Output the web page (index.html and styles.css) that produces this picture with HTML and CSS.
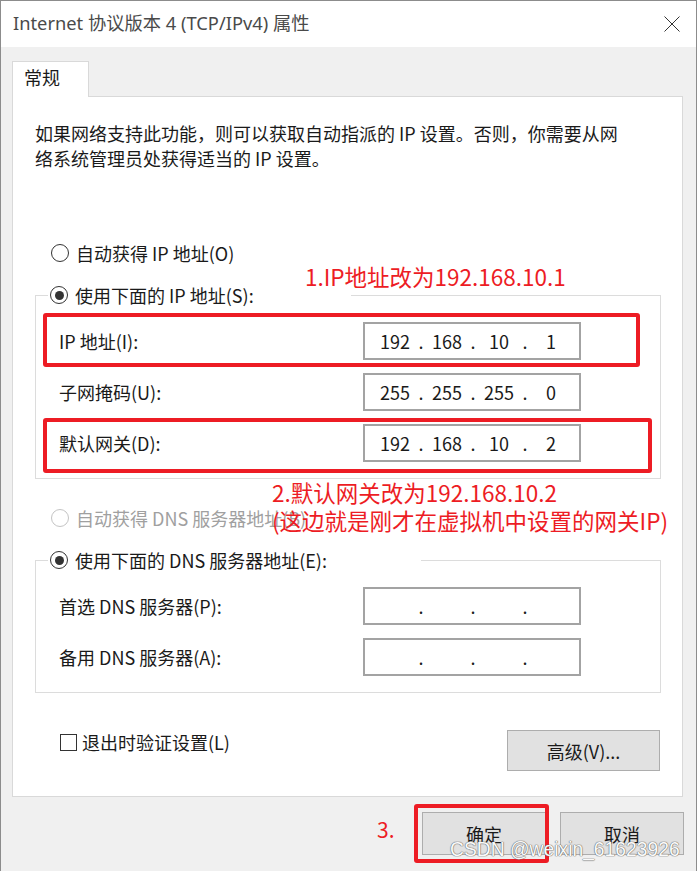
FILE: index.html
```html
<!DOCTYPE html>
<html lang="zh-CN">

<head>
    <meta charset="UTF-8">
    <meta name="viewport" content="width=device-width, initial-scale=1.0">
    <title>Internet 协议版本 4 (TCP/IPv4) 属性</title>
    <link rel="stylesheet" href="styles.css">
</head>

<body>
    <div class="window">
        <div class="titlebar">
            <span class="title">Internet 协议版本 4 (TCP/IPv4) 属性</span>
            <svg class="close" width="16" height="16" viewBox="0 0 16 16">
                <path d="M0.5 0.5 L15.5 15.5 M15.5 0.5 L0.5 15.5" stroke="#333" stroke-width="1" fill="none" />
            </svg>
        </div>

        <div class="main">
            <div class="tabs">
                <div class="tab">常规</div>
            </div>

            <div class="panel">
                <p class="desc">如果网络支持此功能，则可以获取自动指派的 IP 设置。否则，你需要从网<br>络系统管理员处获得适当的 IP 设置。</p>

                <!-- IP -->
                <label class="radio first"><span class="circle"></span>自动获得 IP 地址(O)</label>

                <div class="group">
                    <label class="radio legend legend-ip"><span class="circle checked"></span>使用下面的 IP 地址(S):</label>
                    <div class="rows">
                        <div class="row">
                            <span class="label">IP 地址(I):</span>
                            <div class="ip">
                                <span class="oct">192</span><span class="dot">.</span><span class="oct">168</span><span class="dot">.</span><span class="oct">10</span><span class="dot">.</span><span class="oct">1</span>
                            </div>
                        </div>
                        <div class="row">
                            <span class="label">子网掩码(U):</span>
                            <div class="ip">
                                <span class="oct">255</span><span class="dot">.</span><span class="oct">255</span><span class="dot">.</span><span class="oct">255</span><span class="dot">.</span><span class="oct">0</span>
                            </div>
                        </div>
                        <div class="row">
                            <span class="label">默认网关(D):</span>
                            <div class="ip">
                                <span class="oct">192</span><span class="dot">.</span><span class="oct">168</span><span class="dot">.</span><span class="oct">10</span><span class="dot">.</span><span class="oct">2</span>
                            </div>
                        </div>
                    </div>
                </div>

                <!-- DNS -->
                <label class="radio disabled dns-auto"><span class="circle"></span>自动获得 DNS 服务器地址(B)</label>

                <div class="group">
                    <label class="radio legend legend-dns"><span class="circle checked"></span>使用下面的 DNS 服务器地址(E):</label>
                    <div class="rows">
                        <div class="row">
                            <span class="label">首选 DNS 服务器(P):</span>
                            <div class="ip">
                                <span class="oct"></span><span class="dot">.</span><span class="oct"></span><span class="dot">.</span><span class="oct"></span><span class="dot">.</span><span class="oct"></span>
                            </div>
                        </div>
                        <div class="row">
                            <span class="label">备用 DNS 服务器(A):</span>
                            <div class="ip">
                                <span class="oct"></span><span class="dot">.</span><span class="oct"></span><span class="dot">.</span><span class="oct"></span><span class="dot">.</span><span class="oct"></span>
                            </div>
                        </div>
                    </div>
                </div>

                <div class="bottom">
                    <label class="check"><span class="box"></span>退出时验证设置(L)</label>
                    <button class="btn btn-adv">高级(V)...</button>
                </div>
            </div>

            <div class="actions">
                <button class="btn">确定</button>
                <button class="btn">取消</button>
            </div>
        </div>

        <!-- annotations drawn over the dialog -->
        <div class="mark mark-ip"></div>
        <div class="mark mark-gw"></div>
        <div class="mark mark-ok"></div>
        <div class="note note-ip">1.IP地址改为192.168.10.1</div>
        <div class="note note-gw">2.默认网关改为192.168.10.2<br>(这边就是刚才在虚拟机中设置的网关IP)</div>
        <div class="note note-ok">3.</div>
        <div class="watermark">CSDN @weixin_61623926</div>
    </div>
</body>

</html>
```

FILE: styles.css
```css
body {
    margin: 0;
    font-family: "Noto Sans CJK SC", "Noto Sans", sans-serif;
    font-size: 18px;
    color: #1a1a1a;
}

.window {
    position: relative;
    width: 697px;
    height: 871px;
    box-sizing: border-box;
    border: 1px solid #8c8c8c;
    border-bottom: none;
    background: #f0f0f0;
    overflow: hidden;
}

.titlebar {
    height: 46px;
    background: white;
    display: flex;
    align-items: center;
    justify-content: space-between;
    padding: 0 16px 0 12px;
}

.title {
    font-family: "Noto Sans", "Noto Sans CJK SC", sans-serif;
    font-size: 18.3px;
    color: #4a4a4a;
    line-height: 24px;
    margin-top: -2px;
}

.close {
    display: block;
    margin-top: -1px;
}

.main {
    padding: 14px 0 0 11px;
}

.tabs {
    display: flex;
}

.tab {
    width: 77px;
    height: 36px;
    box-sizing: border-box;
    border: 1px solid #d9d9d9;
    border-bottom: none;
    background: white;
    padding: 3px 0 0 11px;
    line-height: 24px;
    margin-bottom: -1px;
    position: relative;
    z-index: 1;
}

.panel {
    width: 671px;
    height: 701px;
    box-sizing: border-box;
    background: white;
    border: 1px solid #d9d9d9;
}

.desc {
    margin: 0;
    padding: 24px 0 0 22px;
    line-height: 25px;
}

.radio {
    display: flex;
    align-items: center;
    line-height: 24px;
    padding-left: 38px;
}

.radio.first {
    margin-top: 70px;
}

.circle {
    width: 18px;
    height: 18px;
    box-sizing: border-box;
    border: 1px solid #333;
    border-radius: 50%;
    margin-right: 7px;
    display: flex;
    align-items: center;
    justify-content: center;
    background: white;
}

.circle.checked::after {
    content: "";
    width: 9px;
    height: 9px;
    border-radius: 50%;
    background: #333;
}

.radio.disabled {
    color: #a0a0a0;
}

.radio.disabled .circle {
    border-color: #c4c4c4;
}

.dns-auto {
    margin-top: 27px;
}

.group {
    margin: 30px 0 0 22px;
    width: 626px;
    box-sizing: border-box;
    border: 1px solid #dcdcdc;
    padding-bottom: 16px;
}

.radio.legend {
    margin: -13px 0 0 12px;
    padding-left: 2px;
    background: white;
    box-sizing: border-box;
}

.legend-ip {
    width: 303px;
}

.legend-dns {
    width: 373px;
}

.rows {
    display: flex;
    flex-direction: column;
    gap: 13px;
    padding: 15px 0 0 23px;
}

.row {
    display: flex;
    align-items: center;
}

.label {
    width: 304px;
    line-height: 24px;
}

.ip {
    width: 218px;
    height: 38px;
    box-sizing: border-box;
    border: 2px solid #a3a3a3;
    display: flex;
    align-items: center;
    padding-left: 7px;
    line-height: 24px;
}

.oct {
    width: 46px;
    text-align: center;
}

.dot {
    width: 6px;
    text-align: center;
}

.bottom {
    display: flex;
    justify-content: space-between;
    align-items: flex-start;
    margin-top: 37px;
    padding: 0 22px 0 47px;
}

.check {
    display: flex;
    align-items: center;
    line-height: 24px;
}

.box {
    width: 17px;
    height: 17px;
    box-sizing: border-box;
    border: 1px solid #333;
    margin-right: 5px;
}

.btn {
    font-family: "Noto Sans CJK SC", "Noto Sans", sans-serif;
    font-size: 18px;
    color: #1a1a1a;
    width: 124px;
    height: 43px;
    background: #e1e1e1;
    border: 1px solid #adadad;
    padding: 0;
}

.btn-adv {
    width: 153px;
    height: 41px;
}

.actions {
    display: flex;
    justify-content: flex-end;
    gap: 14px;
    padding-right: 12px;
    margin-top: 15px;
}

/* red marks */
.mark {
    position: absolute;
    border: 4px solid #ed1c24;
    border-radius: 3px;
    box-sizing: border-box;
}

.mark-ip {
    left: 42px;
    top: 312px;
    width: 597px;
    height: 54px;
}

.mark-gw {
    left: 42px;
    top: 417px;
    width: 609px;
    height: 55px;
}

.mark-ok {
    left: 413px;
    top: 803px;
    width: 135px;
    height: 59px;
}

.note {
    position: absolute;
    color: #ed1c24;
    font-size: 22.5px;
    line-height: 28px;
    white-space: nowrap;
}

.note-ip {
    left: 304px;
    top: 261px;
}

.note-gw {
    left: 271px;
    top: 477px;
}

.note-ok {
    left: 376px;
    top: 814px;
    font-size: 21px;
}

.watermark {
    position: absolute;
    left: 449px;
    top: 838px;
    font-family: "Liberation Sans", Arial, sans-serif;
    font-size: 19.3px;
    line-height: 22px;
    color: #fafafa;
    text-shadow: 0 0 1px #6e6e6e, 0 0 1px #6e6e6e, 0 0 1px #6e6e6e;
}
```
